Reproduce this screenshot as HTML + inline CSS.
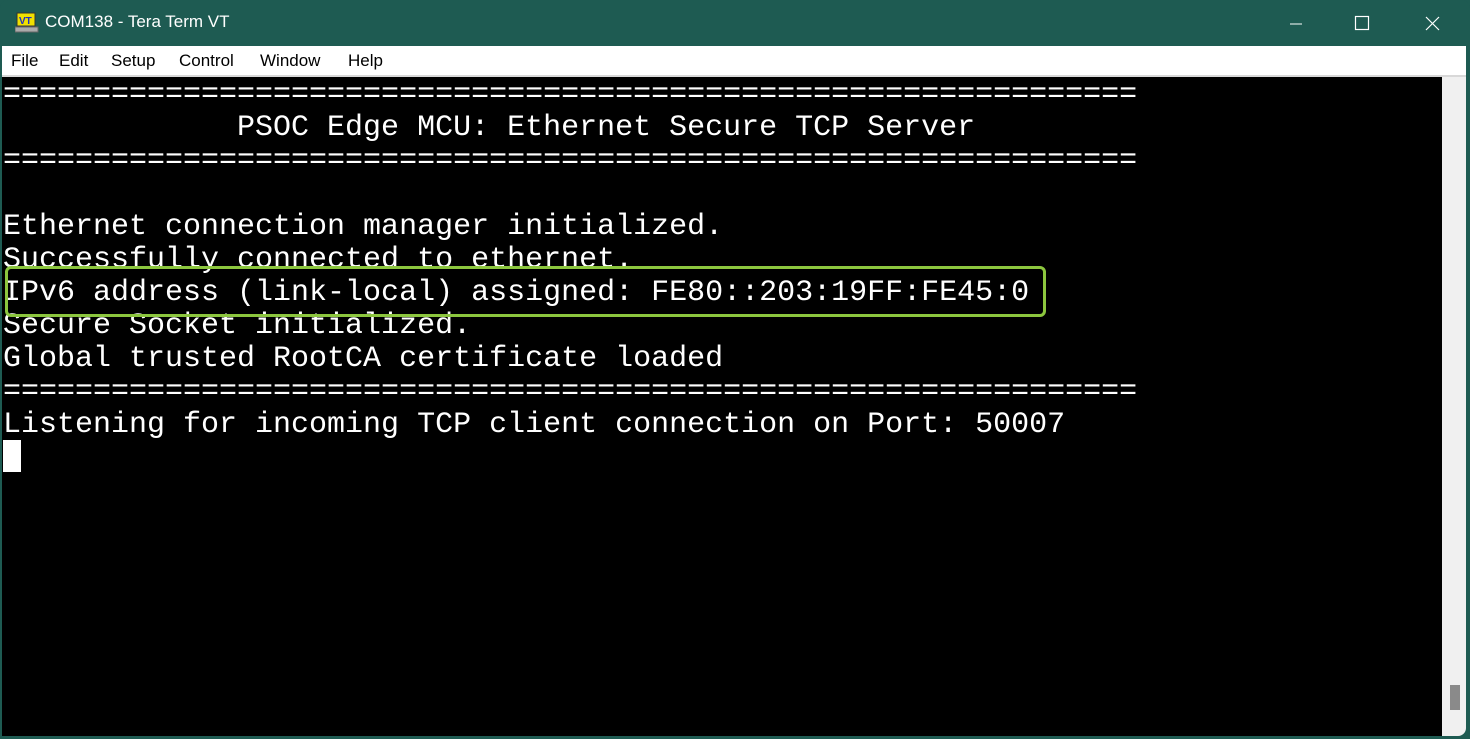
<!DOCTYPE html>
<html><head><style>
html,body{margin:0;padding:0;width:1470px;height:739px;overflow:hidden;background:#1e5b52;}
.win{position:absolute;left:0;top:0;width:1470px;height:739px;background:#1e5b52;border-radius:8px;}
.title{position:absolute;left:45px;top:12px;font:17px "Liberation Sans",sans-serif;color:#fff;}
.menu{position:absolute;left:2px;top:46px;width:1464px;height:29px;background:#fff;border-bottom:2px solid #d8d8d8;}
.menu span{position:absolute;top:5px;font:17px "Liberation Sans",sans-serif;color:#000;}
.term{position:absolute;left:2px;top:77px;width:1440px;height:659px;background:#000;}
.sb{position:absolute;left:1442px;top:77px;width:24px;height:659px;background:#f0f0f0;border-bottom-right-radius:8px;}
.thumb{position:absolute;left:8px;top:608px;width:10px;height:25px;background:#8a8a8a;}
pre{position:absolute;left:1px;top:2px;margin:0;font:30px/33px "Liberation Mono","Courier New",monospace;color:#fff;}
.box{position:absolute;left:5px;top:266px;width:1035px;height:45px;border:3px solid #8cc63e;border-radius:6px;}
.cur{position:absolute;left:1px;top:363px;width:18px;height:32px;background:#fff;}
</style></head><body>
<div class="win">
<svg style="position:absolute;left:15px;top:12px" width="24" height="22" viewBox="0 0 24 22"><rect x="2" y="1" width="18" height="13" fill="#f0e000" stroke="#333"/><text x="4" y="12" font-family="Liberation Sans" font-weight="bold" font-size="10" fill="#2030c0">VT</text><rect x="0" y="15" width="23" height="5" fill="#aaa" stroke="#666"/></svg>
<div class="title">COM138 - Tera Term VT</div>
<svg style="position:absolute;left:1290px;top:14px" width="160" height="20"><line x1="0" y1="10" x2="12" y2="10" stroke="#fff"/><rect x="65.5" y="2.5" width="13" height="13" fill="none" stroke="#fff" stroke-width="1.2"/><path d="M136 3 L149 16 M149 3 L136 16" stroke="#fff" stroke-width="1.2"/></svg>
<div class="menu"><span style="left:9px">File</span><span style="left:57px">Edit</span><span style="left:109px">Setup</span><span style="left:177px">Control</span><span style="left:258px">Window</span><span style="left:346px">Help</span></div>
<div class="term">
<pre>===============================================================
             PSOC Edge MCU: Ethernet Secure TCP Server
===============================================================

Ethernet connection manager initialized.
Successfully connected to ethernet.
IPv6 address (link-local) assigned: FE80::203:19FF:FE45:0
Secure Socket initialized.
Global trusted RootCA certificate loaded
===============================================================
Listening for incoming TCP client connection on Port: 50007</pre>
<div class="cur"></div>
</div>
<div class="box"></div>
<div class="sb"><div class="thumb"></div></div>
</div>
</body></html>
